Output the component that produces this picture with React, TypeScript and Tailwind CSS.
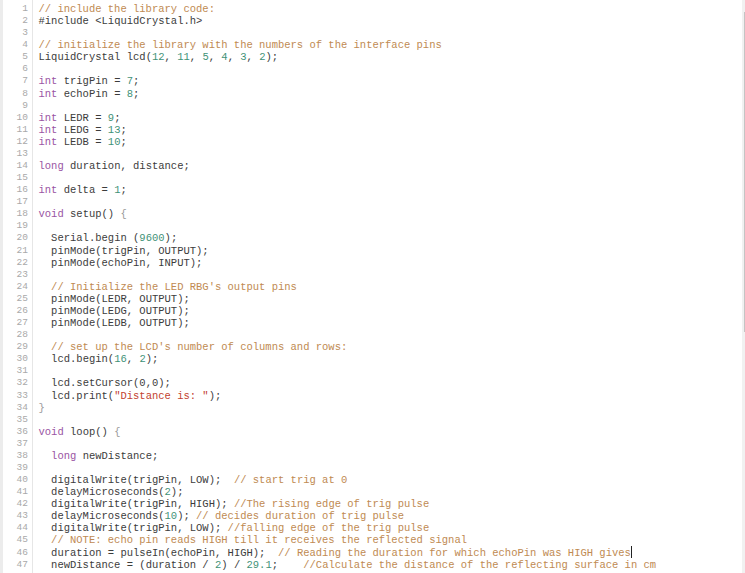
import React from 'react';

type Tok = { t: string; k?: 'c' | 'k' | 'n' | 's' | 'p' };

const kind: Record<string, string> = {
    c: 'text-[#c08a52]',
    k: 'text-[#9a55a3]',
    n: 'text-[#3f9277]',
    s: 'text-[#c2412f]',
    p: 'text-[#9a9a9a]',
};

const KEYWORDS = ['int', 'long', 'void'];

// tiny highlighter, good enough for this sketch
const highlight = (line: string, plainNums = false): Tok[] => {
    const out: Tok[] = [];
    let rest = line;
    const ci = rest.indexOf('//');
    let comment = '';
    if (ci >= 0) {
        comment = rest.slice(ci);
        rest = rest.slice(0, ci);
    }
    const re = /("[^"]*")|(\b\d+(?:\.\d+)?\b)|(\b[A-Za-z_]\w*\b)|([{}])/g;
    let last = 0;
    let m: RegExpExecArray | null;
    while ((m = re.exec(rest))) {
        if (m.index > last) out.push({ t: rest.slice(last, m.index) });
        if (m[1]) out.push({ t: m[1], k: 's' });
        else if (m[2]) out.push({ t: m[2], k: plainNums ? undefined : 'n' });
        else if (m[3]) out.push({ t: m[3], k: KEYWORDS.includes(m[3]) ? 'k' : undefined });
        else if (m[4]) out.push({ t: m[4], k: 'p' });
        last = m.index + m[0].length;
    }
    if (last < rest.length) out.push({ t: rest.slice(last) });
    if (comment) out.push({ t: comment, k: 'c' });
    return out;
};

const code: string[] = [
    '// include the library code:',
    '#include <LiquidCrystal.h>',
    '',
    '// initialize the library with the numbers of the interface pins',
    'LiquidCrystal lcd(12, 11, 5, 4, 3, 2);',
    '',
    'int trigPin = 7;',
    'int echoPin = 8;',
    '',
    'int LEDR = 9;',
    'int LEDG = 13;',
    'int LEDB = 10;',
    '',
    'long duration, distance;',
    '',
    'int delta = 1;',
    '',
    'void setup() {',
    '',
    '  Serial.begin (9600);',
    '  pinMode(trigPin, OUTPUT);',
    '  pinMode(echoPin, INPUT);',
    '',
    "  // Initialize the LED RBG's output pins",
    '  pinMode(LEDR, OUTPUT);',
    '  pinMode(LEDG, OUTPUT);',
    '  pinMode(LEDB, OUTPUT);',
    '',
    "  // set up the LCD's number of columns and rows:",
    '  lcd.begin(16, 2);',
    '',
    '  lcd.setCursor(0,0);',
    '  lcd.print("Distance is: ");',
    '}',
    '',
    'void loop() {',
    '',
    '  long newDistance;',
    '',
    '  digitalWrite(trigPin, LOW);  // start trig at 0',
    '  delayMicroseconds(2);',
    '  digitalWrite(trigPin, HIGH); //The rising edge of trig pulse',
    '  delayMicroseconds(10); // decides duration of trig pulse',
    '  digitalWrite(trigPin, LOW); //falling edge of the trig pulse',
    '  // NOTE: echo pin reads HIGH till it receives the reflected signal',
    '  duration = pulseIn(echoPin, HIGH);  // Reading the duration for which echoPin was HIGH gives',
    '  newDistance = (duration / 2) / 29.1;    //Calculate the distance of the reflecting surface in cm',
];

const CURSOR_LINE = 45;

const App = () => {
    return (
        <div className="flex h-[573px] w-[745px] overflow-hidden bg-white font-['Liberation_Mono',monospace]">
            {/* gutter */}
            <div className="flex w-[33px] shrink-0 border-l-[3px] border-r border-l-[#ececec] border-r-[#e6e6e6] bg-white pt-[3px]">
                <div className="w-[25px] text-right text-[9.5px] leading-[12.08px] text-[#a9a9a9]">
                    {code.map((_, i) => (
                        <div key={i} className="h-[12.08px]">{i + 1}</div>
                    ))}
                </div>
            </div>

            {/* editor */}
            <div className="flex-1 pl-[5.5px] pt-[3px] text-[10.5px] leading-[12.08px] text-[#3c3c3c]">
                {code.map((line, i) => (
                    <div key={i} className="relative h-[12.08px] whitespace-pre">
                        {highlight(line, i === 31).map((tok, j) => (
                            <span key={j} className={tok.k ? kind[tok.k] : undefined}>{tok.t}</span>
                        ))}
                        {i === CURSOR_LINE && (
                            <span className="relative">
                                <span className="absolute left-0 top-[-1px] h-[12px] w-px bg-[#222]" />
                            </span>
                        )}
                    </div>
                ))}
            </div>

            {/* scrollbar */}
            <div className="flex w-[3px] shrink-0 justify-end bg-[#f1f1f1] pt-[12px]">
                <div className="h-[320px] w-px bg-[#c4c4c4]" />
            </div>
        </div>
    );
};

export default App;
